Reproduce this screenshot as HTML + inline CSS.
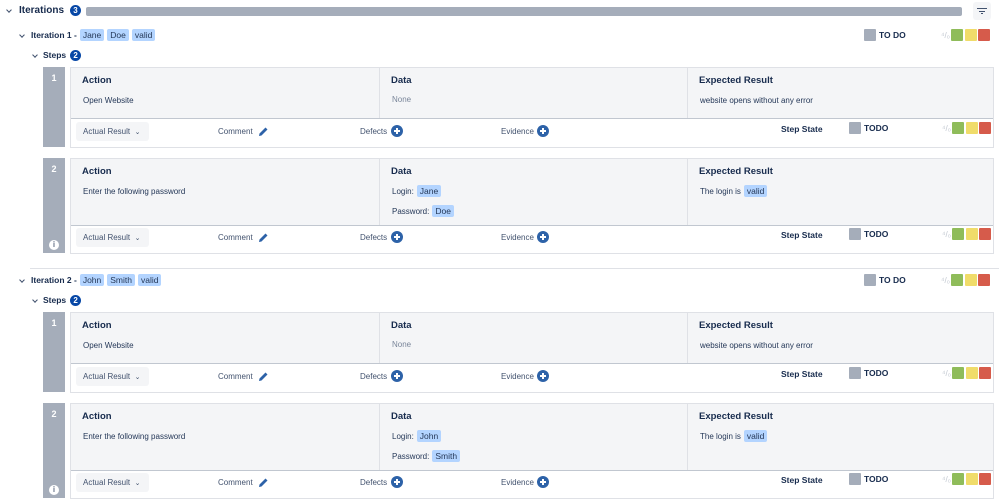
<!DOCTYPE html>
<html><head><meta charset="utf-8"><style>
*{margin:0;padding:0;box-sizing:border-box}
body{width:999px;height:498px;overflow:hidden;background:#fff;font-family:"Liberation Sans",sans-serif;color:#172b4d;position:relative}
.a{position:absolute;white-space:nowrap}
.b{font-weight:bold}
.chev{position:absolute;width:4px;height:4px;border-right:1px solid #42526e;border-bottom:1px solid #42526e;transform:rotate(45deg)}
.badge{display:inline-block;vertical-align:middle;width:11px;height:11px;border-radius:6px;background:#0747a6;color:#fff;font-size:8px;font-weight:bold;text-align:center;line-height:11px;margin-left:4px}
.tag{background:#b3d4ff;color:#253858;border-radius:2px;padding:1px 3px;font-size:8.5px;font-weight:normal;margin-left:3px}
.sq{position:absolute;width:12px;height:12px;border-radius:1px}
.lbar{position:absolute;left:43px;width:22px;background:#a5adba;color:#fff;font-size:9px;font-weight:bold;text-align:center;padding-top:6px}
.card{position:absolute;left:70px;width:924px;border:1px solid #dfe1e6;background:#fff}
.top{position:absolute;left:0;top:0;width:100%;background:#f4f5f7;border-bottom:1.5px solid #c1c7d0}
.col{position:absolute;top:0;bottom:0;width:308px}
.col+.col{border-left:1px solid #dfe1e6}
.h{position:absolute;left:11px;top:7px;font-size:9.5px;font-weight:bold}
.t{position:absolute;left:12px;font-size:8px;color:#253858}
.bot{position:absolute;left:0;bottom:0;width:100%}
.ar{position:absolute;left:5px;top:4px;width:73px;height:19px;background:#f4f5f7;border-radius:3px;font-size:8px;color:#42526e;padding:5px 0 0 7px}
.lb{position:absolute;top:9px;font-size:8px;color:#42526e}
.plus{position:absolute;top:7px;width:12px;height:12px;border-radius:6px;background:#2d62a8}
.plus:before{content:"";position:absolute;left:3px;top:5.2px;width:6px;height:1.6px;background:#fff}
.plus:after{content:"";position:absolute;left:5.2px;top:3px;width:1.6px;height:6px;background:#fff}
.pen{position:absolute;top:8px}
</style></head><body>
<div class="chev" style="left:7px;top:8px"></div>
<div class="a b" style="left:19px;top:5px;font-size:10px">Iterations<span class="badge" style="margin-left:6px">3</span></div>
<div class="a" style="left:86px;top:7px;width:876px;height:9px;background:#a5adba;border-radius:2px"></div>
<div class="a" style="left:973px;top:2px;width:18px;height:18px;background:#f4f5f7;border-radius:3px"></div>
<div class="a" style="left:977px;top:8px;width:10px;height:1.3px;background:#42526e"></div>
<div class="a" style="left:979px;top:10.5px;width:6px;height:1.3px;background:#42526e"></div>
<div class="a" style="left:981px;top:13px;width:2px;height:1.3px;background:#42526e"></div>

<!-- ITERATION 1 -->
<div class="chev" style="left:20px;top:33px"></div>
<div class="a b" style="left:31px;top:30px;font-size:8.5px">Iteration 1 -<span class="tag">Jane</span><span class="tag">Doe</span><span class="tag">valid</span></div>
<div class="sq" style="left:864px;top:29px;background:#a5adba"></div>
<div class="a b" style="left:879px;top:30px;font-size:8.5px">TO DO</div>
<div class="a" style="left:941px;top:31px;font-size:8px;color:#c1c7d0">⁴/₀</div>
<div class="sq" style="left:951px;top:29px;background:#8fbc5a"></div>
<div class="sq" style="left:965px;top:29px;background:#f0dc6a"></div>
<div class="sq" style="left:978px;top:29px;background:#d65b4b"></div>
<div class="chev" style="left:33px;top:53px"></div>
<div class="a b" style="left:43px;top:50px;font-size:8.5px">Steps<span class="badge">2</span></div>

<div class="lbar" style="top:67px;height:80px">1</div>
<div class="card" style="top:67px;height:81px">
 <div class="top" style="height:51px">
  <div class="col" style="left:0"><div class="h">Action</div><div class="t" style="top:28px">Open Website</div></div>
  <div class="col" style="left:308px"><div class="h">Data</div><div class="t" style="top:27px;color:#7a869a">None</div></div>
  <div class="col" style="left:616px"><div class="h">Expected Result</div><div class="t" style="top:28px">website opens without any error</div></div>
 </div>
 <div class="bot" style="height:29px">
  <div class="ar">Actual Result &nbsp;<span style="font-size:7px">⌄</span></div>
  <div class="lb" style="left:147px">Comment</div><svg class="pen" style="left:187px" width="11" height="11" viewBox="0 0 11 11"><path d="M1 10 L1.5 7.5 L7.5 1.5 L9.5 3.5 L3.5 9.5 Z" fill="#2d62a8"/></svg>
  <div class="lb" style="left:289px">Defects</div><div class="plus" style="left:320px"></div>
  <div class="lb" style="left:430px">Evidence</div><div class="plus" style="left:466px"></div>
  <div class="a b" style="left:710px;top:6px;font-size:8.5px">Step State</div>
  <div class="sq" style="left:778px;top:4px;background:#a5adba"></div>
  <div class="a b" style="left:793px;top:5px;font-size:8.5px">TODO</div>
  <div class="a" style="left:871px;top:6px;font-size:8px;color:#c1c7d0">⁴/₀</div>
  <div class="sq" style="left:881px;top:4px;background:#8fbc5a"></div>
  <div class="sq" style="left:895px;top:4px;background:#f0dc6a"></div>
  <div class="sq" style="left:908px;top:4px;background:#d65b4b"></div>
 </div>
</div>

<div class="lbar" style="top:158px;height:95px">2<div class="a" style="left:6px;top:82px;width:10px;height:10px;border-radius:5px;background:#fff;color:#6b778c;font-size:8px;line-height:10px;text-align:center">i</div></div>
<div class="card" style="top:158px;height:96px">
 <div class="top" style="height:67px">
  <div class="col" style="left:0"><div class="h">Action</div><div class="t" style="top:28px">Enter the following password</div></div>
  <div class="col" style="left:308px"><div class="h">Data</div><div class="t" style="top:27px">Login:<span class="tag">Jane</span></div><div class="t" style="top:47px">Password:<span class="tag">Doe</span></div></div>
  <div class="col" style="left:616px"><div class="h">Expected Result</div><div class="t" style="top:27px">The login is<span class="tag">valid</span></div></div>
 </div>
 <div class="bot" style="height:29px">
  <div class="ar">Actual Result &nbsp;<span style="font-size:7px">⌄</span></div>
  <div class="lb" style="left:147px">Comment</div><svg class="pen" style="left:187px" width="11" height="11" viewBox="0 0 11 11"><path d="M1 10 L1.5 7.5 L7.5 1.5 L9.5 3.5 L3.5 9.5 Z" fill="#2d62a8"/></svg>
  <div class="lb" style="left:289px">Defects</div><div class="plus" style="left:320px"></div>
  <div class="lb" style="left:430px">Evidence</div><div class="plus" style="left:466px"></div>
  <div class="a b" style="left:710px;top:6px;font-size:8.5px">Step State</div>
  <div class="sq" style="left:778px;top:4px;background:#a5adba"></div>
  <div class="a b" style="left:793px;top:5px;font-size:8.5px">TODO</div>
  <div class="a" style="left:871px;top:6px;font-size:8px;color:#c1c7d0">⁴/₀</div>
  <div class="sq" style="left:881px;top:4px;background:#8fbc5a"></div>
  <div class="sq" style="left:895px;top:4px;background:#f0dc6a"></div>
  <div class="sq" style="left:908px;top:4px;background:#d65b4b"></div>
 </div>
</div>

<div class="a" style="left:30px;top:268px;width:969px;height:1px;background:#dfe1e6"></div>

<!-- ITERATION 2 -->
<div class="chev" style="left:20px;top:278px"></div>
<div class="a b" style="left:31px;top:275px;font-size:8.5px">Iteration 2 -<span class="tag">John</span><span class="tag">Smith</span><span class="tag">valid</span></div>
<div class="sq" style="left:864px;top:274px;background:#a5adba"></div>
<div class="a b" style="left:879px;top:275px;font-size:8.5px">TO DO</div>
<div class="a" style="left:941px;top:276px;font-size:8px;color:#c1c7d0">⁴/₀</div>
<div class="sq" style="left:951px;top:274px;background:#8fbc5a"></div>
<div class="sq" style="left:965px;top:274px;background:#f0dc6a"></div>
<div class="sq" style="left:978px;top:274px;background:#d65b4b"></div>
<div class="chev" style="left:33px;top:298px"></div>
<div class="a b" style="left:43px;top:295px;font-size:8.5px">Steps<span class="badge">2</span></div>

<div class="lbar" style="top:312px;height:80px">1</div>
<div class="card" style="top:312px;height:81px">
 <div class="top" style="height:51px">
  <div class="col" style="left:0"><div class="h">Action</div><div class="t" style="top:28px">Open Website</div></div>
  <div class="col" style="left:308px"><div class="h">Data</div><div class="t" style="top:27px;color:#7a869a">None</div></div>
  <div class="col" style="left:616px"><div class="h">Expected Result</div><div class="t" style="top:28px">website opens without any error</div></div>
 </div>
 <div class="bot" style="height:29px">
  <div class="ar">Actual Result &nbsp;<span style="font-size:7px">⌄</span></div>
  <div class="lb" style="left:147px">Comment</div><svg class="pen" style="left:187px" width="11" height="11" viewBox="0 0 11 11"><path d="M1 10 L1.5 7.5 L7.5 1.5 L9.5 3.5 L3.5 9.5 Z" fill="#2d62a8"/></svg>
  <div class="lb" style="left:289px">Defects</div><div class="plus" style="left:320px"></div>
  <div class="lb" style="left:430px">Evidence</div><div class="plus" style="left:466px"></div>
  <div class="a b" style="left:710px;top:6px;font-size:8.5px">Step State</div>
  <div class="sq" style="left:778px;top:4px;background:#a5adba"></div>
  <div class="a b" style="left:793px;top:5px;font-size:8.5px">TODO</div>
  <div class="a" style="left:871px;top:6px;font-size:8px;color:#c1c7d0">⁴/₀</div>
  <div class="sq" style="left:881px;top:4px;background:#8fbc5a"></div>
  <div class="sq" style="left:895px;top:4px;background:#f0dc6a"></div>
  <div class="sq" style="left:908px;top:4px;background:#d65b4b"></div>
 </div>
</div>

<div class="lbar" style="top:403px;height:95px">2<div class="a" style="left:6px;top:82px;width:10px;height:10px;border-radius:5px;background:#fff;color:#6b778c;font-size:8px;line-height:10px;text-align:center">i</div></div>
<div class="card" style="top:403px;height:96px">
 <div class="top" style="height:67px">
  <div class="col" style="left:0"><div class="h">Action</div><div class="t" style="top:28px">Enter the following password</div></div>
  <div class="col" style="left:308px"><div class="h">Data</div><div class="t" style="top:27px">Login:<span class="tag">John</span></div><div class="t" style="top:47px">Password:<span class="tag">Smith</span></div></div>
  <div class="col" style="left:616px"><div class="h">Expected Result</div><div class="t" style="top:27px">The login is<span class="tag">valid</span></div></div>
 </div>
 <div class="bot" style="height:29px">
  <div class="ar">Actual Result &nbsp;<span style="font-size:7px">⌄</span></div>
  <div class="lb" style="left:147px">Comment</div><svg class="pen" style="left:187px" width="11" height="11" viewBox="0 0 11 11"><path d="M1 10 L1.5 7.5 L7.5 1.5 L9.5 3.5 L3.5 9.5 Z" fill="#2d62a8"/></svg>
  <div class="lb" style="left:289px">Defects</div><div class="plus" style="left:320px"></div>
  <div class="lb" style="left:430px">Evidence</div><div class="plus" style="left:466px"></div>
  <div class="a b" style="left:710px;top:6px;font-size:8.5px">Step State</div>
  <div class="sq" style="left:778px;top:4px;background:#a5adba"></div>
  <div class="a b" style="left:793px;top:5px;font-size:8.5px">TODO</div>
  <div class="a" style="left:871px;top:6px;font-size:8px;color:#c1c7d0">⁴/₀</div>
  <div class="sq" style="left:881px;top:4px;background:#8fbc5a"></div>
  <div class="sq" style="left:895px;top:4px;background:#f0dc6a"></div>
  <div class="sq" style="left:908px;top:4px;background:#d65b4b"></div>
 </div>
</div>
</body></html>
